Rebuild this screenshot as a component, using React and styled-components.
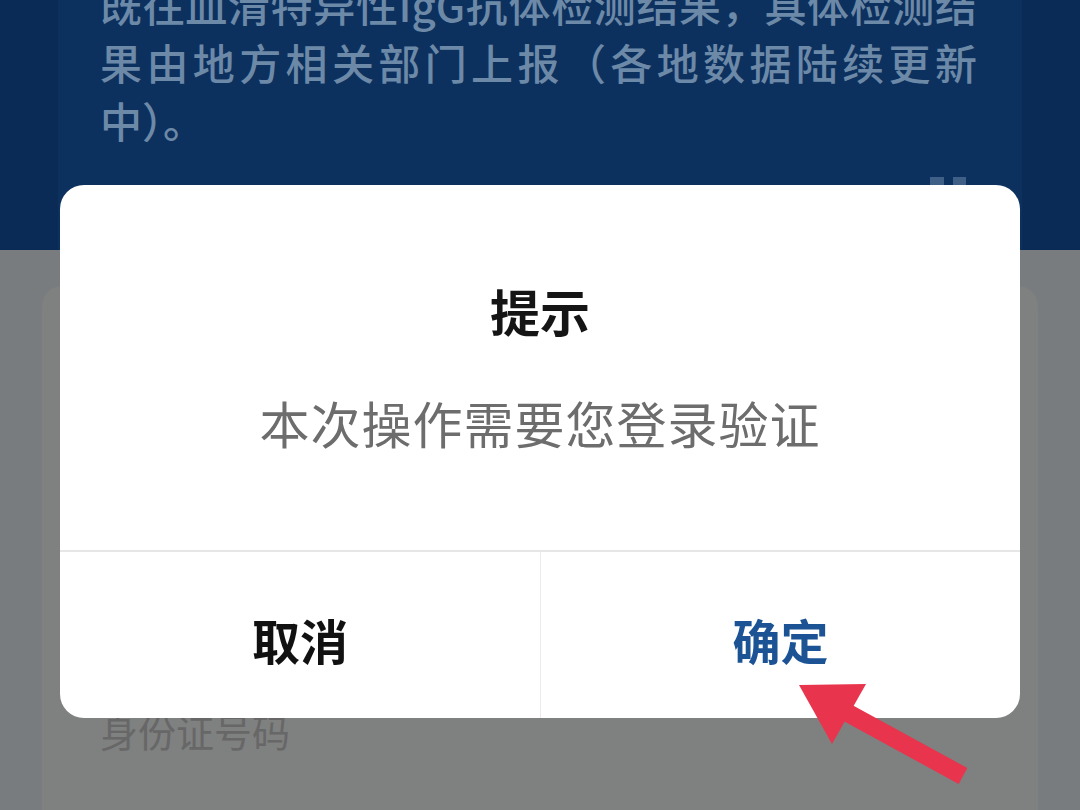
import React from 'react';
import styled, { createGlobalStyle } from 'styled-components';

const GlobalStyle = createGlobalStyle`
  html, body {
    margin: 0;
    padding: 0;
    background: #7f8080;
    overflow: hidden;
  }
  * {
    box-sizing: border-box;
  }
`;

const FONT = `"Noto Sans CJK SC", "Noto Sans", "Liberation Sans", sans-serif`;

const Page = styled.div`
  width: 1080px;
  height: 810px;
  display: flex;
  flex-direction: column;
  overflow: hidden;
  font-family: ${FONT};
  background: #797c7e;
`;
const Header = styled.div`
  height: 250px;
  flex-shrink: 0;
  display: flex;
  padding: 0 58px;
  background: #0a2b55;
`;
const HeaderCard = styled.div`
  flex: 1;
  display: flex;
  flex-direction: column;
  padding: 0 45px 0 42px;
  background: #0d315e;
  overflow: hidden;
`;
const Notice = styled.div`
  margin-top: -25px;
  color: #6d89a8;
  font-size: 42px;
  font-weight: 500;
  line-height: 58px;
`;
const NoticeLine = styled.div`
  white-space: nowrap;
  text-align: ${({ justified }) => (justified ? 'justify' : 'left')};
  text-align-last: ${({ justified }) => (justified ? 'justify' : 'auto')};
  text-justify: inter-character;
`;
const IconRow = styled.div`
  display: flex;
  justify-content: flex-end;
  margin-top: 28px;
  padding-right: 9px;
`;
const Body = styled.div`
  flex: 1;
  display: flex;
  padding: 36px 42px 0;
`;
const FormCard = styled.div`
  flex: 1;
  padding: 421px 58px 0;
  border-radius: 20px 20px 0 0;
  background: #7f8080;
`;
const FieldLabel = styled.div`
  color: #676767;
  font-size: 38px;
  line-height: 48px;
`;
const Dialog = styled.div`
  position: fixed;
  top: 185px;
  left: 60px;
  width: 960px;
  height: 533px;
  display: flex;
  flex-direction: column;
  border-radius: 24px;
  background: #fff;
  overflow: hidden;
  font-family: ${FONT};
`;
const DialogBody = styled.div`
  height: 367px;
  display: flex;
  flex-direction: column;
  align-items: center;
  padding-top: 90px;
  gap: 42px;
  border-bottom: 2px solid #e6e6e6;
`;
const Title = styled.div`
  color: #151515;
  font-size: 50px;
  font-weight: 700;
  line-height: 70px;
`;
const Message = styled.div`
  color: #6d6d6d;
  font-size: 50px;
  font-weight: 400;
  line-height: 70px;
  letter-spacing: 1px;
`;
const Actions = styled.div`
  flex: 1;
  display: grid;
  grid-template-columns: 1fr 1fr;
`;
const Action = styled.div`
  display: flex;
  align-items: center;
  justify-content: center;
  padding-top: 8px;
  color: ${({ primary }) => (primary ? '#1b5395' : '#111')};
  font-size: 48px;
  font-weight: 700;
  & + & {
    border-left: 1px solid #efe9ea;
  }
`;
const ArrowLayer = styled.svg`
  position: fixed;
  top: 0;
  left: 0;
  width: 1080px;
  height: 810px;
  pointer-events: none;
`;

function FoldIcon() {
  return (
    <svg width="40" height="24" viewBox="0 0 40 24">
      <rect x="2" y="0" width="14" height="9" fill="#3f5f86" />
      <rect x="25" y="0" width="13" height="9" fill="#3f5f86" />
    </svg>
  );
}

function App() {
  return (
    <>
      <GlobalStyle />
      <Page>
        <Header>
          <HeaderCard>
            <Notice>
              <NoticeLine justified>既往血清特异性IgG抗体检测结果，具体检测结</NoticeLine>
              <NoticeLine justified>果由地方相关部门上报（各地数据陆续更新</NoticeLine>
              <NoticeLine>中）。</NoticeLine>
            </Notice>
            <IconRow>
              <FoldIcon />
            </IconRow>
          </HeaderCard>
        </Header>
        <Body>
          <FormCard>
            <FieldLabel>身份证号码</FieldLabel>
          </FormCard>
        </Body>
      </Page>

      <Dialog>
        <DialogBody>
          <Title>提示</Title>
          <Message>本次操作需要您登录验证</Message>
        </DialogBody>
        <Actions>
          <Action>取消</Action>
          <Action primary>确定</Action>
        </Actions>
      </Dialog>

      <ArrowLayer viewBox="0 0 1080 810">
        <polygon points="799,685 866,684 832,744" fill="#e8344c" />
        <line x1="846" y1="712" x2="963" y2="776" stroke="#e8344c" strokeWidth="18" />
      </ArrowLayer>
    </>
  );
}

export default App;
